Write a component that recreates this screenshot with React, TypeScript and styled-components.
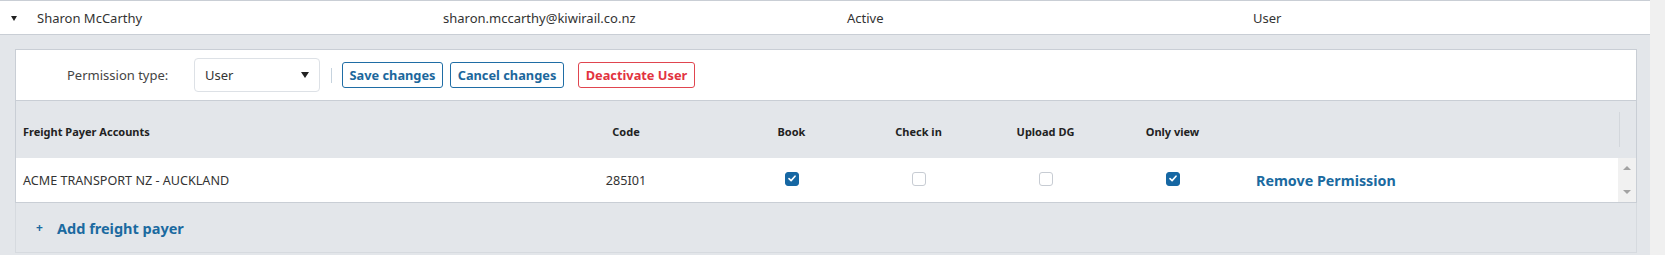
import React from "react";
import styled, { createGlobalStyle } from "styled-components";

const GlobalStyle = createGlobalStyle`
  html, body { margin: 0; padding: 0; background: #ffffff; }
  body { font-family: "Noto Sans", "Open Sans", Arial, sans-serif; color: #333; }
  * { box-sizing: border-box; }
`;

const Page = styled.div`
  display: flex;
  width: 1665px;
  height: 255px;
  overflow: hidden;
`;

const Main = styled.div`
  width: 1650px;
  display: flex;
  flex-direction: column;
`;

const Gutter = styled.div`
  width: 15px;
  background: #f0f0f0;
`;

const UserRow = styled.div`
  display: grid;
  grid-template-columns: 26px 406px 404px 406px 1fr;
  align-items: center;
  height: 35px;
  padding-left: 11px;
  background: #fff;
  border-top: 1px solid #c9ced5;
  border-bottom: 1px solid #c9ced5;
  font-size: 13px;
  color: #333;
`;

const Caret = styled.span`
  width: 0;
  height: 0;
  border-left: 3.5px solid transparent;
  border-right: 3.5px solid transparent;
  border-top: 5px solid #222;
  margin-top: 1px;
`;

const Details = styled.div`
  flex: 1;
  background: #e3e6ea;
  padding: 14px 13px 2px 15px;
`;

const Panel = styled.div`
  display: flex;
  flex-direction: column;
`;

const Toolbar = styled.div`
  display: flex;
  align-items: center;
  height: 52px;
  background: #fff;
  border: 1px solid #c9ced5;
  padding-left: 51px;
`;

const Label = styled.span`
  width: 127px;
  font-size: 13px;
  color: #444;
`;

const Select = styled.div`
  display: flex;
  align-items: center;
  justify-content: space-between;
  width: 126px;
  height: 34px;
  margin-top: -1px;
  padding: 0 10px 0 10px;
  border: 1px solid #dde1e6;
  border-radius: 4px;
  background: #fff;
  font-size: 13px;
  color: #333;
`;

const SelectCaret = styled.span`
  width: 0;
  height: 0;
  border-left: 4px solid transparent;
  border-right: 4px solid transparent;
  border-top: 6px solid #222;
`;

const Divider = styled.span`
  width: 1px;
  height: 15px;
  background: #c6d3de;
  margin: 1px 10px 0 11px;
`;

const Button = styled.button<{ $danger?: boolean; $gap?: number; $w: number }>`
  display: flex;
  align-items: center;
  justify-content: center;
  width: ${(p) => p.$w}px;
  height: 26px;
  margin-left: ${(p) => p.$gap ?? 0}px;
  padding: 0;
  background: #fff;
  border: 1px solid ${(p) => (p.$danger ? "#e0454f" : "#1f6da5")};
  border-radius: 3px;
  color: ${(p) => (p.$danger ? "#e2333f" : "#1c679c")};
  font-family: "Noto Sans", "Open Sans", Arial, sans-serif;
  font-weight: 700;
  font-size: 12.8px;
  line-height: 1;
  white-space: nowrap;
  cursor: pointer;
`;

const Table = styled.div`
  border-left: 1px solid #c9ced5;
  border-right: 1px solid #c9ced5;
  border-bottom: 1px solid #c9ced5;
`;

const Cols = "508px 204px 127px 127px 127px 127px 382px 18px";

const HeadRow = styled.div`
  display: grid;
  grid-template-columns: ${Cols};
  height: 57px;
  padding-top: 3px;
  align-items: center;
  font-size: 11px;
  font-weight: 700;
  color: #222;
`;

const DataRow = styled.div`
  display: grid;
  grid-template-columns: ${Cols};
  height: 44px;
  align-items: center;
  background: #fff;
  font-size: 12.6px;
  color: #333;
`;

const Cell = styled.div<{ $align?: "left" | "center"; $pad?: number }>`
  display: flex;
  align-items: center;
  justify-content: ${(p) => (p.$align === "center" ? "center" : "flex-start")};
  padding-left: ${(p) => p.$pad ?? 0}px;
  white-space: nowrap;
`;

const HeadScroll = styled.div`
  align-self: stretch;
  margin: 8px 0 11px 1px;
  border-left: 1px solid #d3d7dc;
`;

const RowScroll = styled.div`
  align-self: stretch;
  background: #f1f1f1;
  display: flex;
  flex-direction: column;
  align-items: center;
  justify-content: space-between;
  padding: 8px 0 8px;
`;

const Arrow = styled.span<{ $down?: boolean }>`
  width: 0;
  height: 0;
  border-left: 4px solid transparent;
  border-right: 4px solid transparent;
  ${(p) =>
    p.$down
      ? "border-top: 4px solid #a3a3a3;"
      : "border-bottom: 4px solid #a3a3a3;"}
`;

const Box = styled.span<{ $checked?: boolean }>`
  width: 14px;
  height: 14px;
  margin-top: -3px;
  border-radius: 3px;
  display: flex;
  align-items: center;
  justify-content: center;
  background: ${(p) => (p.$checked ? "#1667a3" : "#fff")};
  border: 1px solid ${(p) => (p.$checked ? "#1667a3" : "#c7ccd3")};
`;

const LinkText = styled.span<{ $size: number }>`
  font-size: ${(p) => p.$size}px;
  font-weight: 700;
  color: #1b6aa0;
`;

const Footer = styled.div`
  display: flex;
  align-items: center;
  height: 50px;
  padding-left: 20px;
  gap: 14px;
  border-left: 1px solid #d6dadf;
  border-right: 1px solid #d6dadf;
  border-bottom: 1px solid #d6dadf;
  color: #1b6aa0;
`;

const Plus = styled.span`
  font-size: 12px;
  font-weight: 700;
  width: 7px;
  text-align: center;
`;

const Check = ({ checked }: { checked?: boolean }) => (
  <Box $checked={checked}>
    {checked && (
      <svg width="8" height="7" viewBox="0 0 8 7">
        <path d="M1 3.6 L3.1 5.6 L7 1.2" fill="none" stroke="#fff" strokeWidth="1.6" strokeLinecap="round" strokeLinejoin="round" />
      </svg>
    )}
  </Box>
);

export default function App() {
  return (
    <>
      <GlobalStyle />
      <Page>
        <Main>
          <UserRow>
            <Caret />
            <span>Sharon McCarthy</span>
            <span>sharon.mccarthy@kiwirail.co.nz</span>
            <span>Active</span>
            <span>User</span>
          </UserRow>
          <Details>
            <Panel>
              <Toolbar>
                <Label>Permission type:</Label>
                <Select>
                  <span>User</span>
                  <SelectCaret />
                </Select>
                <Divider />
                <Button $w={101}>Save changes</Button>
                <Button $w={114} $gap={7}>
                  Cancel changes
                </Button>
                <Button $w={117} $gap={14} $danger>
                  Deactivate User
                </Button>
              </Toolbar>
              <Table>
                <HeadRow>
                  <Cell $pad={7}>Freight Payer Accounts</Cell>
                  <Cell $align="center">Code</Cell>
                  <Cell $align="center">Book</Cell>
                  <Cell $align="center">Check in</Cell>
                  <Cell $align="center">Upload DG</Cell>
                  <Cell $align="center">Only view</Cell>
                  <Cell />
                  <HeadScroll />
                </HeadRow>
                <DataRow>
                  <Cell $pad={7}>ACME TRANSPORT NZ - AUCKLAND</Cell>
                  <Cell $align="center">285I01</Cell>
                  <Cell $align="center">
                    <Check checked />
                  </Cell>
                  <Cell $align="center">
                    <Check />
                  </Cell>
                  <Cell $align="center">
                    <Check />
                  </Cell>
                  <Cell $align="center">
                    <Check checked />
                  </Cell>
                  <Cell $pad={20}>
                    <LinkText $size={14.3}>Remove Permission</LinkText>
                  </Cell>
                  <RowScroll>
                    <Arrow />
                    <Arrow $down />
                  </RowScroll>
                </DataRow>
              </Table>
              <Footer>
                <Plus>+</Plus>
                <LinkText $size={14.5}>Add freight payer</LinkText>
              </Footer>
            </Panel>
          </Details>
        </Main>
        <Gutter />
      </Page>
    </>
  );
}
